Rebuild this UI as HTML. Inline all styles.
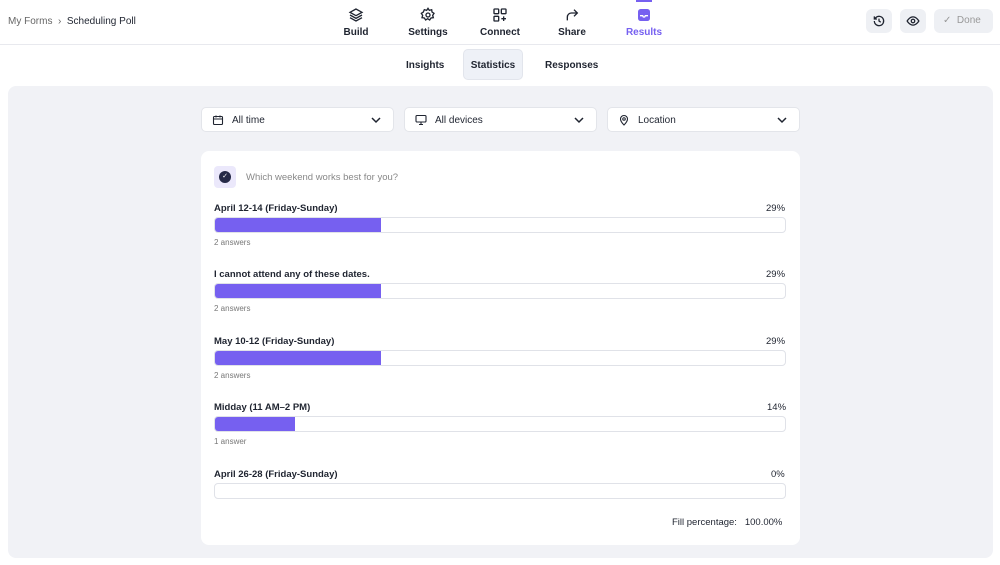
<!DOCTYPE html><html><head><style>
*{box-sizing:border-box;margin:0;padding:0}
body{width:1000px;height:565px;background:#fff;font-family:"Liberation Sans",sans-serif;color:#1f2430;position:relative;overflow:hidden}
.a{position:absolute}
.nav{font-size:10px;font-weight:bold;text-align:center;width:60px}
.nav svg{display:block;margin:0 auto 4px}
.btn{background:#eef0f4;border-radius:6px}
.sel{background:#fff;border:1px solid #e3e5ea;border-radius:5px;height:25px;font-size:10px;display:flex;align-items:center;padding-left:10px;padding-top:1px;gap:8px}
.sel .ch{position:absolute;right:12px;top:8px}
.lbl{font-size:9.5px;font-weight:bold;color:#1f2430}
.pct{font-size:9.5px;color:#1f2430}
.trk{height:16px;border:1px solid #e0e2e8;border-radius:4px;width:572px;left:214px;overflow:hidden;background:#fff}
.trk div{height:100%;background:#7660f0}
.ans{font-size:8px;color:#777}
</style></head><body>
<div class="a" style="left:8px;top:16px;font-size:10px;color:#666">My Forms &nbsp;›&nbsp; <span style="color:#1f2430">Scheduling Poll</span></div>
<div class="a nav" style="left:326px;top:7px"><svg width="16" height="16" viewBox="0 0 24 24" fill="none" stroke="#1f2430" stroke-width="2"><path d="M12 3 3 8l9 5 9-5z M3 12l9 5 9-5 M3 16l9 5 9-5"/></svg>Build</div>
<div class="a nav" style="left:398px;top:7px"><svg width="16" height="16" viewBox="0 0 24 24" fill="none" stroke="#1f2430" stroke-width="2"><circle cx="12" cy="12" r="3"/><path d="M12 2l2 3 3.5-1 .5 3.5 3 2-2 3 1 3.5-3.5.5-2 3-3-2-3 2-2-3-3.5-.5 1-3.5-2-3 3-2L6.5 4 10 5z"/></svg>Settings</div>
<div class="a nav" style="left:470px;top:7px"><svg width="16" height="16" viewBox="0 0 24 24" fill="none" stroke="#1f2430" stroke-width="2"><rect x="3" y="3" width="7" height="7" rx="1"/><rect x="14" y="3" width="7" height="7" rx="1"/><rect x="3" y="14" width="7" height="7" rx="1"/><path d="M17.5 14v7M14 17.5h7"/></svg>Connect</div>
<div class="a nav" style="left:542px;top:7px"><svg width="16" height="16" viewBox="0 0 24 24" fill="none" stroke="#1f2430" stroke-width="2"><path d="M5 20v-5a6 6 0 0 1 6-6h9M15 4l5 5-5 5"/></svg>Share</div>
<div class="a" style="left:636px;top:0;width:16px;height:2px;background:#7660f0"></div>
<div class="a nav" style="left:614px;top:7px;color:#7660f0"><svg width="16" height="16" viewBox="0 0 24 24"><rect x="3" y="3" width="18" height="18" rx="4" fill="#7660f0"/><path d="M6 13h4l1 2h2l1-2h4" stroke="#fff" stroke-width="2" fill="none"/></svg>Results</div>
<div class="a btn" style="left:866px;top:9px;width:26px;height:24px"><svg class="a" style="left:6px;top:5px" width="14" height="14" viewBox="0 0 24 24" fill="none" stroke="#1f2430" stroke-width="2.2"><path d="M4 12a8 8 0 1 0 2.5-5.8L4 8.5M4 4v4.5h4.5M12 8v4l3 2"/></svg></div>
<div class="a btn" style="left:900px;top:9px;width:26px;height:24px"><svg class="a" style="left:6px;top:5px" width="14" height="14" viewBox="0 0 24 24" fill="none" stroke="#1f2430" stroke-width="2.2"><path d="M2 12s4-7 10-7 10 7 10 7-4 7-10 7S2 12 2 12z"/><circle cx="12" cy="12" r="3"/></svg></div>
<div class="a btn" style="left:934px;top:9px;width:59px;height:24px;font-size:10px;color:#999;line-height:24px;padding-left:9px">✓ &nbsp;Done</div>
<div class="a" style="left:0;top:44px;width:1000px;height:1px;background:#e8e9ee"></div>
<div class="a" style="left:406px;top:60px;font-size:10px;font-weight:bold">Insights</div>
<div class="a" style="left:463px;top:49px;width:60px;height:31px;background:#eef1f7;border:1px solid #e2e5ec;border-radius:5px;font-size:10px;font-weight:bold;text-align:center;line-height:31px">Statistics</div>
<div class="a" style="left:545px;top:60px;font-size:10px;font-weight:bold">Responses</div>
<div class="a" style="left:8px;top:86px;width:985px;height:472px;background:#f1f2f6;border-radius:8px"></div>
<div class="a sel" style="left:201px;top:107px;width:193px"><svg width="12" height="12" viewBox="0 0 24 24" fill="none" stroke="#1f2430" stroke-width="2.2"><rect x="3" y="5" width="18" height="16" rx="2"/><path d="M3 10h18M8 3v4M16 3v4"/></svg>All time<svg class="ch" width="10" height="8" viewBox="0 0 10 8" fill="none" stroke="#1f2430" stroke-width="1.5"><path d="M1 2l4 4 4-4"/></svg></div>
<div class="a sel" style="left:404px;top:107px;width:193px"><svg width="12" height="12" viewBox="0 0 24 24" fill="none" stroke="#1f2430" stroke-width="2.2"><rect x="2" y="3" width="20" height="13" rx="2"/><path d="M8 21h8M12 16v5"/></svg>All devices<svg class="ch" width="10" height="8" viewBox="0 0 10 8" fill="none" stroke="#1f2430" stroke-width="1.5"><path d="M1 2l4 4 4-4"/></svg></div>
<div class="a sel" style="left:607px;top:107px;width:193px"><svg width="12" height="12" viewBox="0 0 24 24" fill="none" stroke="#1f2430" stroke-width="2.2"><path d="M12 22s7-7 7-12a7 7 0 0 0-14 0c0 5 7 12 7 12z"/><circle cx="12" cy="10" r="2.5"/></svg>Location<svg class="ch" width="10" height="8" viewBox="0 0 10 8" fill="none" stroke="#1f2430" stroke-width="1.5"><path d="M1 2l4 4 4-4"/></svg></div>
<div class="a" style="left:201px;top:151px;width:599px;height:394px;background:#fff;border-radius:8px"></div>
<div class="a" style="left:214px;top:166px;width:22px;height:22px;background:#ebe8fb;border-radius:4px"><div class="a" style="left:5px;top:5px;width:12px;height:12px;border-radius:50%;background:#262a48;color:#fff;font-size:7px;text-align:center;line-height:12px">✓</div></div>
<div class="a" style="left:246px;top:172px;font-size:9.5px;color:#888">Which weekend works best for you?</div>

<div class="a lbl" style="left:214px;top:203px">April 12-14 (Friday-Sunday)</div><div class="a pct" style="left:766px;top:203px">29%</div>
<div class="a trk" style="top:217px"><div style="width:166px"></div></div><div class="a ans" style="left:214px;top:238px">2 answers</div>

<div class="a lbl" style="left:214px;top:269px">I cannot attend any of these dates.</div><div class="a pct" style="left:766px;top:269px">29%</div>
<div class="a trk" style="top:283px"><div style="width:166px"></div></div><div class="a ans" style="left:214px;top:304px">2 answers</div>

<div class="a lbl" style="left:214px;top:336px">May 10-12 (Friday-Sunday)</div><div class="a pct" style="left:766px;top:336px">29%</div>
<div class="a trk" style="top:350px"><div style="width:166px"></div></div><div class="a ans" style="left:214px;top:371px">2 answers</div>

<div class="a lbl" style="left:214px;top:402px">Midday (11 AM–2 PM)</div><div class="a pct" style="left:767px;top:402px">14%</div>
<div class="a trk" style="top:416px"><div style="width:80px"></div></div><div class="a ans" style="left:214px;top:437px">1 answer</div>

<div class="a lbl" style="left:214px;top:469px">April 26-28 (Friday-Sunday)</div><div class="a pct" style="left:771px;top:469px">0%</div>
<div class="a trk" style="top:483px"><div style="width:0"></div></div>

<div class="a" style="left:672px;top:517px;font-size:9.5px">Fill percentage: &nbsp;&nbsp;100.00%</div>
</body></html>
